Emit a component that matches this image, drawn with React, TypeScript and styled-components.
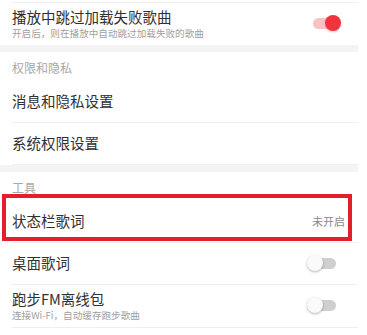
import React from "react";
import styled, { createGlobalStyle } from "styled-components";

const GlobalStyle = createGlobalStyle`
  html, body { margin: 0; padding: 0; background: #ffffff; }
  body { font-family: "Noto Sans CJK SC", "Noto Sans", sans-serif; }
`;

const Page = styled.div`
  width: 358px;
  padding-top: 2px;
  background: #ffffff;
`;

const TopLine = styled.div`
  margin-left: 12px;
  height: 1px;
  background: #f0f0f0;
`;

const Band = styled.div`
  height: 7px;
  background: #f4f4f4;
`;

const SectionHeader = styled.div`
  height: 29px;
  padding-left: 12px;
  padding-top: 9px;
  box-sizing: border-box;
  font-size: 12px;
  line-height: 14px;
  color: #a8a8a8;
`;

const Row = styled.div<{ $sub?: boolean; $noBorder?: boolean }>`
  position: relative;
  margin-left: 12px;
  padding-right: 16px;
  padding-bottom: 2px;
  height: ${(p) => (p.$sub ? 40 : 39)}px;
  display: flex;
  align-items: center;
  justify-content: space-between;
  border-bottom: ${(p) => (p.$noBorder ? "0" : "1px solid #efefef")};
`;

const Texts = styled.div`
  display: flex;
  flex-direction: column;
`;

const Title = styled.div`
  font-size: 14.5px;
  line-height: 18px;
  color: #303030;
`;

const Sub = styled.div`
  font-size: 9.6px;
  line-height: 12px;
  color: #a0a0a0;
  margin-top: 1px;
`;

const Value = styled.div`
  font-size: 11px;
  color: #8a8a8a;
  margin-right: -3px;
`;

const Highlight = styled.div`
  position: absolute;
  left: -10px;
  top: -7px;
  right: 6px;
  bottom: 1px;
  border: 4px solid #e41e2b;
  box-sizing: border-box;
  pointer-events: none;
`;

const SwitchWrap = styled.div`
  position: relative;
  width: 35px;
  height: 18px;
`;

const Track = styled.div<{ $on: boolean }>`
  position: absolute;
  left: 6px;
  top: 4px;
  width: 23px;
  height: 11px;
  border-radius: 6px;
  background: ${(p) => (p.$on ? "#f9c3c6" : "#cfcfcf")};
`;

const Thumb = styled.div<{ $on: boolean }>`
  position: absolute;
  top: 1px;
  left: ${(p) => (p.$on ? 18 : 0)}px;
  width: 16px;
  height: 16px;
  border-radius: 50%;
  background: ${(p) => (p.$on ? "#f1333d" : "#fafafa")};
  box-shadow: ${(p) =>
    p.$on ? "0 1px 2px rgba(200,0,0,0.25)" : "0 1px 2.5px rgba(0,0,0,0.3)"};
`;

const Switch = ({ on }: { on: boolean }) => (
  <SwitchWrap>
    <Track $on={on} />
    <Thumb $on={on} />
  </SwitchWrap>
);

export default function App() {
  return (
    <>
      <GlobalStyle />
      <Page>
        <TopLine />
        <Row $sub $noBorder>
          <Texts>
            <Title>播放中跳过加载失败歌曲</Title>
            <Sub>开启后，则在播放中自动跳过加载失败的歌曲</Sub>
          </Texts>
          <Switch on />
        </Row>
        <Band />
        <SectionHeader>权限和隐私</SectionHeader>
        <Row>
          <Title>消息和隐私设置</Title>
        </Row>
        <Row>
          <Title>系统权限设置</Title>
        </Row>
        <Band />
        <SectionHeader>工具</SectionHeader>
        <Row>
          <Title>状态栏歌词</Title>
          <Value>未开启</Value>
          <Highlight />
        </Row>
        <Row>
          <Title>桌面歌词</Title>
          <Switch on={false} />
        </Row>
        <Row $sub>
          <Texts>
            <Title>跑步FM离线包</Title>
            <Sub>连接Wi-Fi，自动缓存跑步歌曲</Sub>
          </Texts>
          <Switch on={false} />
        </Row>
      </Page>
    </>
  );
}
